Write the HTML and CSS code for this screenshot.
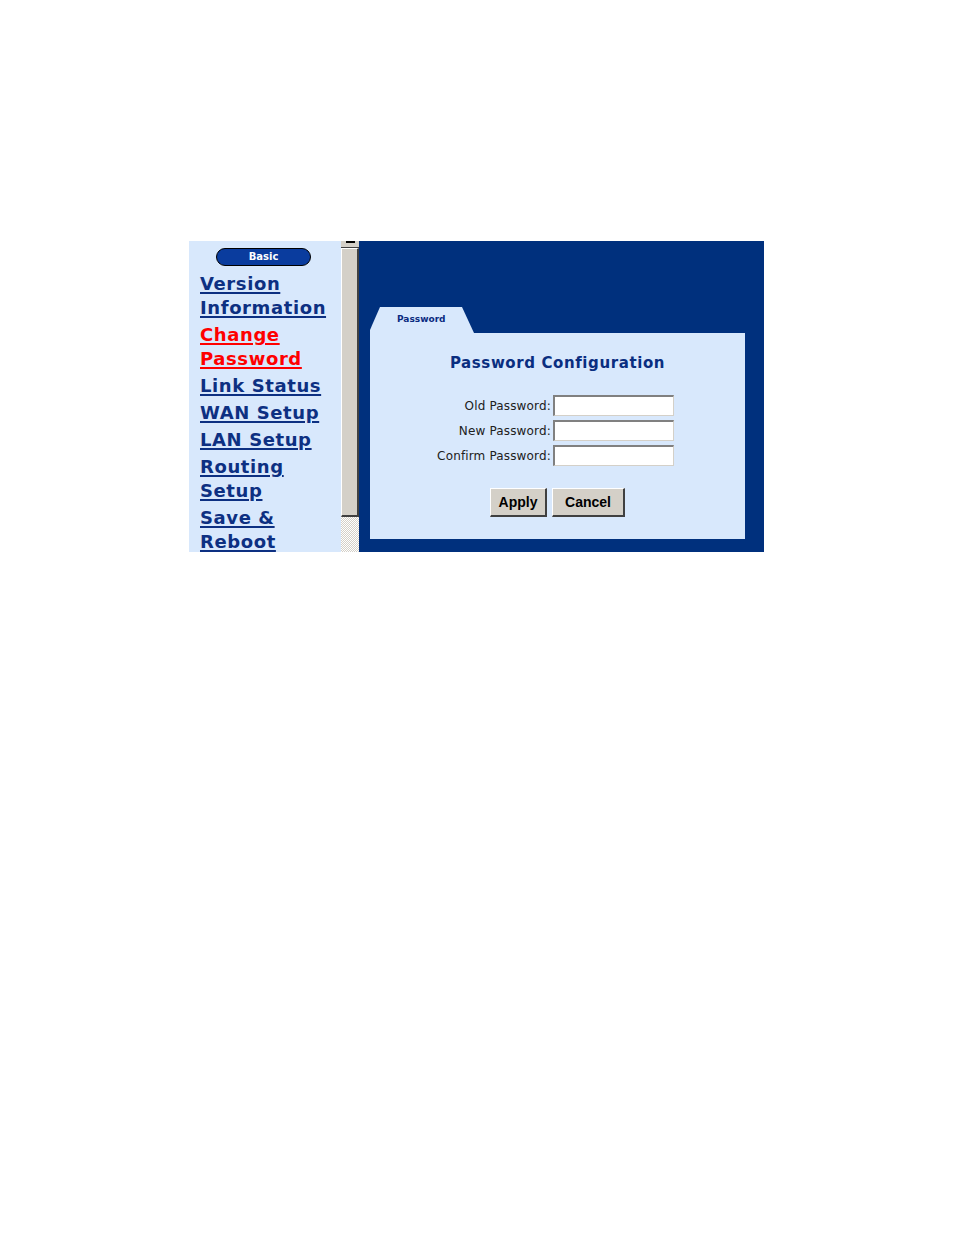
FILE: index.html
```html
<!DOCTYPE html>
<html>
<head>
<meta charset="utf-8">
<link rel="stylesheet" href="styles.css">
</head>
<body>
<div class="frame">
  <nav class="nav">
    <div class="pill">Basic</div>
    <ul class="links">
      <li><a href="#">Version Information</a></li>
      <li><a href="#" class="active">Change Password</a></li>
      <li><a href="#">Link Status</a></li>
      <li><a href="#">WAN Setup</a></li>
      <li><a href="#">LAN Setup</a></li>
      <li><a href="#">Routing Setup</a></li>
      <li><a href="#">Save &amp; Reboot</a></li>
    </ul>
  </nav>
  <div class="scrollbar">
    <div class="sb-btn"><span class="sb-arrow"></span></div>
    <div class="sb-thumb"></div>
    <div class="sb-track"></div>
  </div>
  <main class="main">
    <div class="tab"><span>Password</span></div>
    <section class="panel">
      <h1 class="title">Password Configuration</h1>
      <form class="form">
        <label class="lbl">Old Password:</label><input class="field" type="password">
        <label class="lbl">New Password:</label><input class="field" type="password">
        <label class="lbl">Confirm Password:</label><input class="field" type="password">
      </form>
      <div class="buttons">
        <button class="btn btn-apply">Apply</button>
        <button class="btn btn-cancel">Cancel</button>
      </div>
    </section>
  </main>
</div>
</body>
</html>
```
FILE: styles.css
```css
html, body {
  margin: 0;
  padding: 0;
  background: #ffffff;
}

.frame {
  display: flex;
  margin: 241px 0 0 189px;
  width: 575px;
  height: 311px;
  overflow: hidden;
}

/* left navigation */
.nav {
  width: 152px;
  flex: none;
  background: #d8e8fc;
  padding: 7px 0 0 11px;
  box-sizing: border-box;
}

.pill {
  width: 95px;
  height: 18px;
  box-sizing: border-box;
  margin-left: 16px;
  background: #0a3c9e;
  border: 1px solid #000000;
  border-radius: 9px;
  color: #ffffff;
  font: bold 10px "DejaVu Sans", sans-serif;
  line-height: 16px;
  text-align: center;
}

.links {
  list-style: none;
  margin: 6px 0 0 0;
  padding: 0;
}

.links li {
  margin-bottom: 3px;
}

.links a {
  font: bold 18px "DejaVu Sans", sans-serif;
  line-height: 24px;
  letter-spacing: 0.6px;
  color: #0d3082;
  text-decoration: underline;
  text-decoration-thickness: 2px;
  text-underline-offset: 2px;
}

.links a.active {
  color: #ff0000;
}

/* scrollbar */
.scrollbar {
  width: 18px;
  flex: none;
  display: flex;
  flex-direction: column;
  background: #d4d0c8;
}

.sb-btn {
  height: 6px;
  background: #d4d0c8;
  border-bottom: 1px solid #404040;
  position: relative;
}

.sb-arrow {
  position: absolute;
  left: 5px;
  top: 0;
  width: 9px;
  height: 2px;
  background: #000000;
}

.sb-thumb {
  height: 269px;
  box-sizing: border-box;
  background: #d4d0c8;
  border-top: 1px solid #ffffff;
  border-left: 1px solid #ffffff;
  border-right: 2px solid #404040;
  border-bottom: 2px solid #404040;
}

.sb-track {
  flex: 1;
  background-color: #ffffff;
  background-image:
    linear-gradient(45deg, #d4d0c8 25%, transparent 25%, transparent 75%, #d4d0c8 75%),
    linear-gradient(45deg, #d4d0c8 25%, transparent 25%, transparent 75%, #d4d0c8 75%);
  background-size: 2px 2px;
  background-position: 0 0, 1px 1px;
}

/* main area */
.main {
  flex: 1;
  background: #00307d;
  padding: 66px 19px 13px 11px;
  display: flex;
  flex-direction: column;
}

.tab {
  width: 104px;
  height: 26px;
  flex: none;
  background: #d8e8fc;
  clip-path: polygon(10px 0, 92px 0, 104px 100%, 0 100%, 0 23px, 3px 16px);
  box-sizing: border-box;
  padding: 1px 0 0 27px;
  line-height: 18px;
}

.tab span {
  font: bold 9px "DejaVu Sans", sans-serif;
  color: #0a2a80;
}

.panel {
  flex: 1;
  background: #d8e8fc;
  padding-top: 20px;
}

.title {
  margin: 0;
  text-align: center;
  font: bold 15px "DejaVu Sans", sans-serif;
  line-height: 20px;
  letter-spacing: 0.6px;
  color: #0a2e80;
}

.form {
  display: grid;
  grid-template-columns: auto 121px;
  column-gap: 2px;
  row-gap: 4px;
  justify-content: center;
  align-items: center;
  margin: 22px 0 0 0;
  padding-right: 4px;
}

.lbl {
  text-align: right;
  font: 12px "DejaVu Sans", sans-serif;
  letter-spacing: 0.15px;
  color: #202020;
}

.field {
  width: 121px;
  height: 21px;
  box-sizing: border-box;
  margin: 0;
  padding: 0;
  background: #ffffff;
  border-top: 2px solid #808080;
  border-left: 2px solid #808080;
  border-right: 1px solid #d4d0c8;
  border-bottom: 1px solid #d4d0c8;
}

.buttons {
  display: flex;
  justify-content: center;
  gap: 5px;
  margin-top: 22px;
}

.btn {
  height: 29px;
  box-sizing: border-box;
  margin: 0;
  padding: 0;
  background: #d4d0c8;
  border-top: 1px solid #ffffff;
  border-left: 1px solid #ffffff;
  border-right: 2px solid #404040;
  border-bottom: 2px solid #404040;
  font: bold 14px "Liberation Sans", sans-serif;
  color: #000000;
}

.btn-apply { width: 57px; }
.btn-cancel { width: 73px; }
```
